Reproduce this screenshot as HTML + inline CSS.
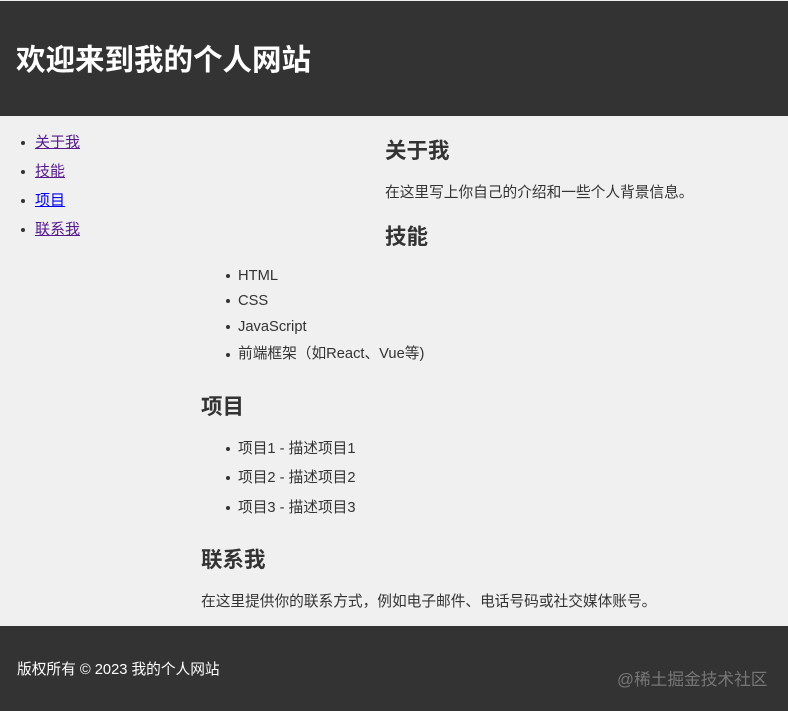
<!DOCTYPE html>
<html><head><meta charset="utf-8"><style>
*{margin:0;padding:0}
body{width:788px;height:711px;background:#f0f0f0;font-family:"Liberation Sans","Noto Sans CJK SC",sans-serif;color:#333;position:relative;overflow:hidden}
.a{position:absolute;white-space:nowrap;line-height:1}
#hd{position:absolute;left:0;top:1px;width:788px;height:115px;background:#333}
#ft{position:absolute;left:0;top:626px;width:788px;height:85px;background:#333}
h1{font-size:29.5px;color:#fff;font-weight:bold}
h2{font-size:21.5px;font-weight:bold;color:#333}
.n{font-size:15px;color:#551a8b;text-decoration:underline}
.n.b{color:#0000ee}
.t{font-size:14.7px}
.d{position:absolute;width:4px;height:4px;border-radius:50%;background:#333}
</style></head><body>
<div id="hd"></div>
<h1 class="a" style="left:16px;top:46px">欢迎来到我的个人网站</h1>
<div class="d" style="left:21px;top:141px"></div><a class="a n" style="left:35px;top:135px">关于我</a>
<div class="d" style="left:21px;top:170px"></div><a class="a n" style="left:35px;top:164px">技能</a>
<div class="d" style="left:21px;top:199px"></div><a class="a n b" style="left:35px;top:193px">项目</a>
<div class="d" style="left:21px;top:228px"></div><a class="a n" style="left:35px;top:222px">联系我</a>
<h2 class="a" style="left:385px;top:141px">关于我</h2>
<div class="a t" style="left:385px;top:186px">在这里写上你自己的介绍和一些个人背景信息。</div>
<h2 class="a" style="left:385px;top:227px">技能</h2>
<div class="d" style="left:226px;top:274px"></div><div class="a t" style="left:238px;top:269px">HTML</div>
<div class="d" style="left:226px;top:299px"></div><div class="a t" style="left:238px;top:294px">CSS</div>
<div class="d" style="left:226px;top:325px"></div><div class="a t" style="left:238px;top:320px">JavaScript</div>
<div class="d" style="left:226px;top:353px"></div><div class="a t" style="left:238px;top:347px">前端框架（如React、Vue等)</div>
<h2 class="a" style="left:201px;top:397px">项目</h2>
<div class="d" style="left:226px;top:447px"></div><div class="a t" style="left:238px;top:442px">项目1 - 描述项目1</div>
<div class="d" style="left:226px;top:476px"></div><div class="a t" style="left:238px;top:471px">项目2 - 描述项目2</div>
<div class="d" style="left:226px;top:506px"></div><div class="a t" style="left:238px;top:501px">项目3 - 描述项目3</div>
<h2 class="a" style="left:201px;top:550px">联系我</h2>
<div class="a t" style="left:201px;top:595px">在这里提供你的联系方式，例如电子邮件、电话号码或社交媒体账号。</div>
<div id="ft"></div>
<div class="a t" style="left:17px;top:663px;color:#fff">版权所有 © 2023 我的个人网站</div>
<div class="a" style="left:617px;top:672px;color:#777;font-size:16.7px">@稀土掘金技术社区</div>
</body></html>
